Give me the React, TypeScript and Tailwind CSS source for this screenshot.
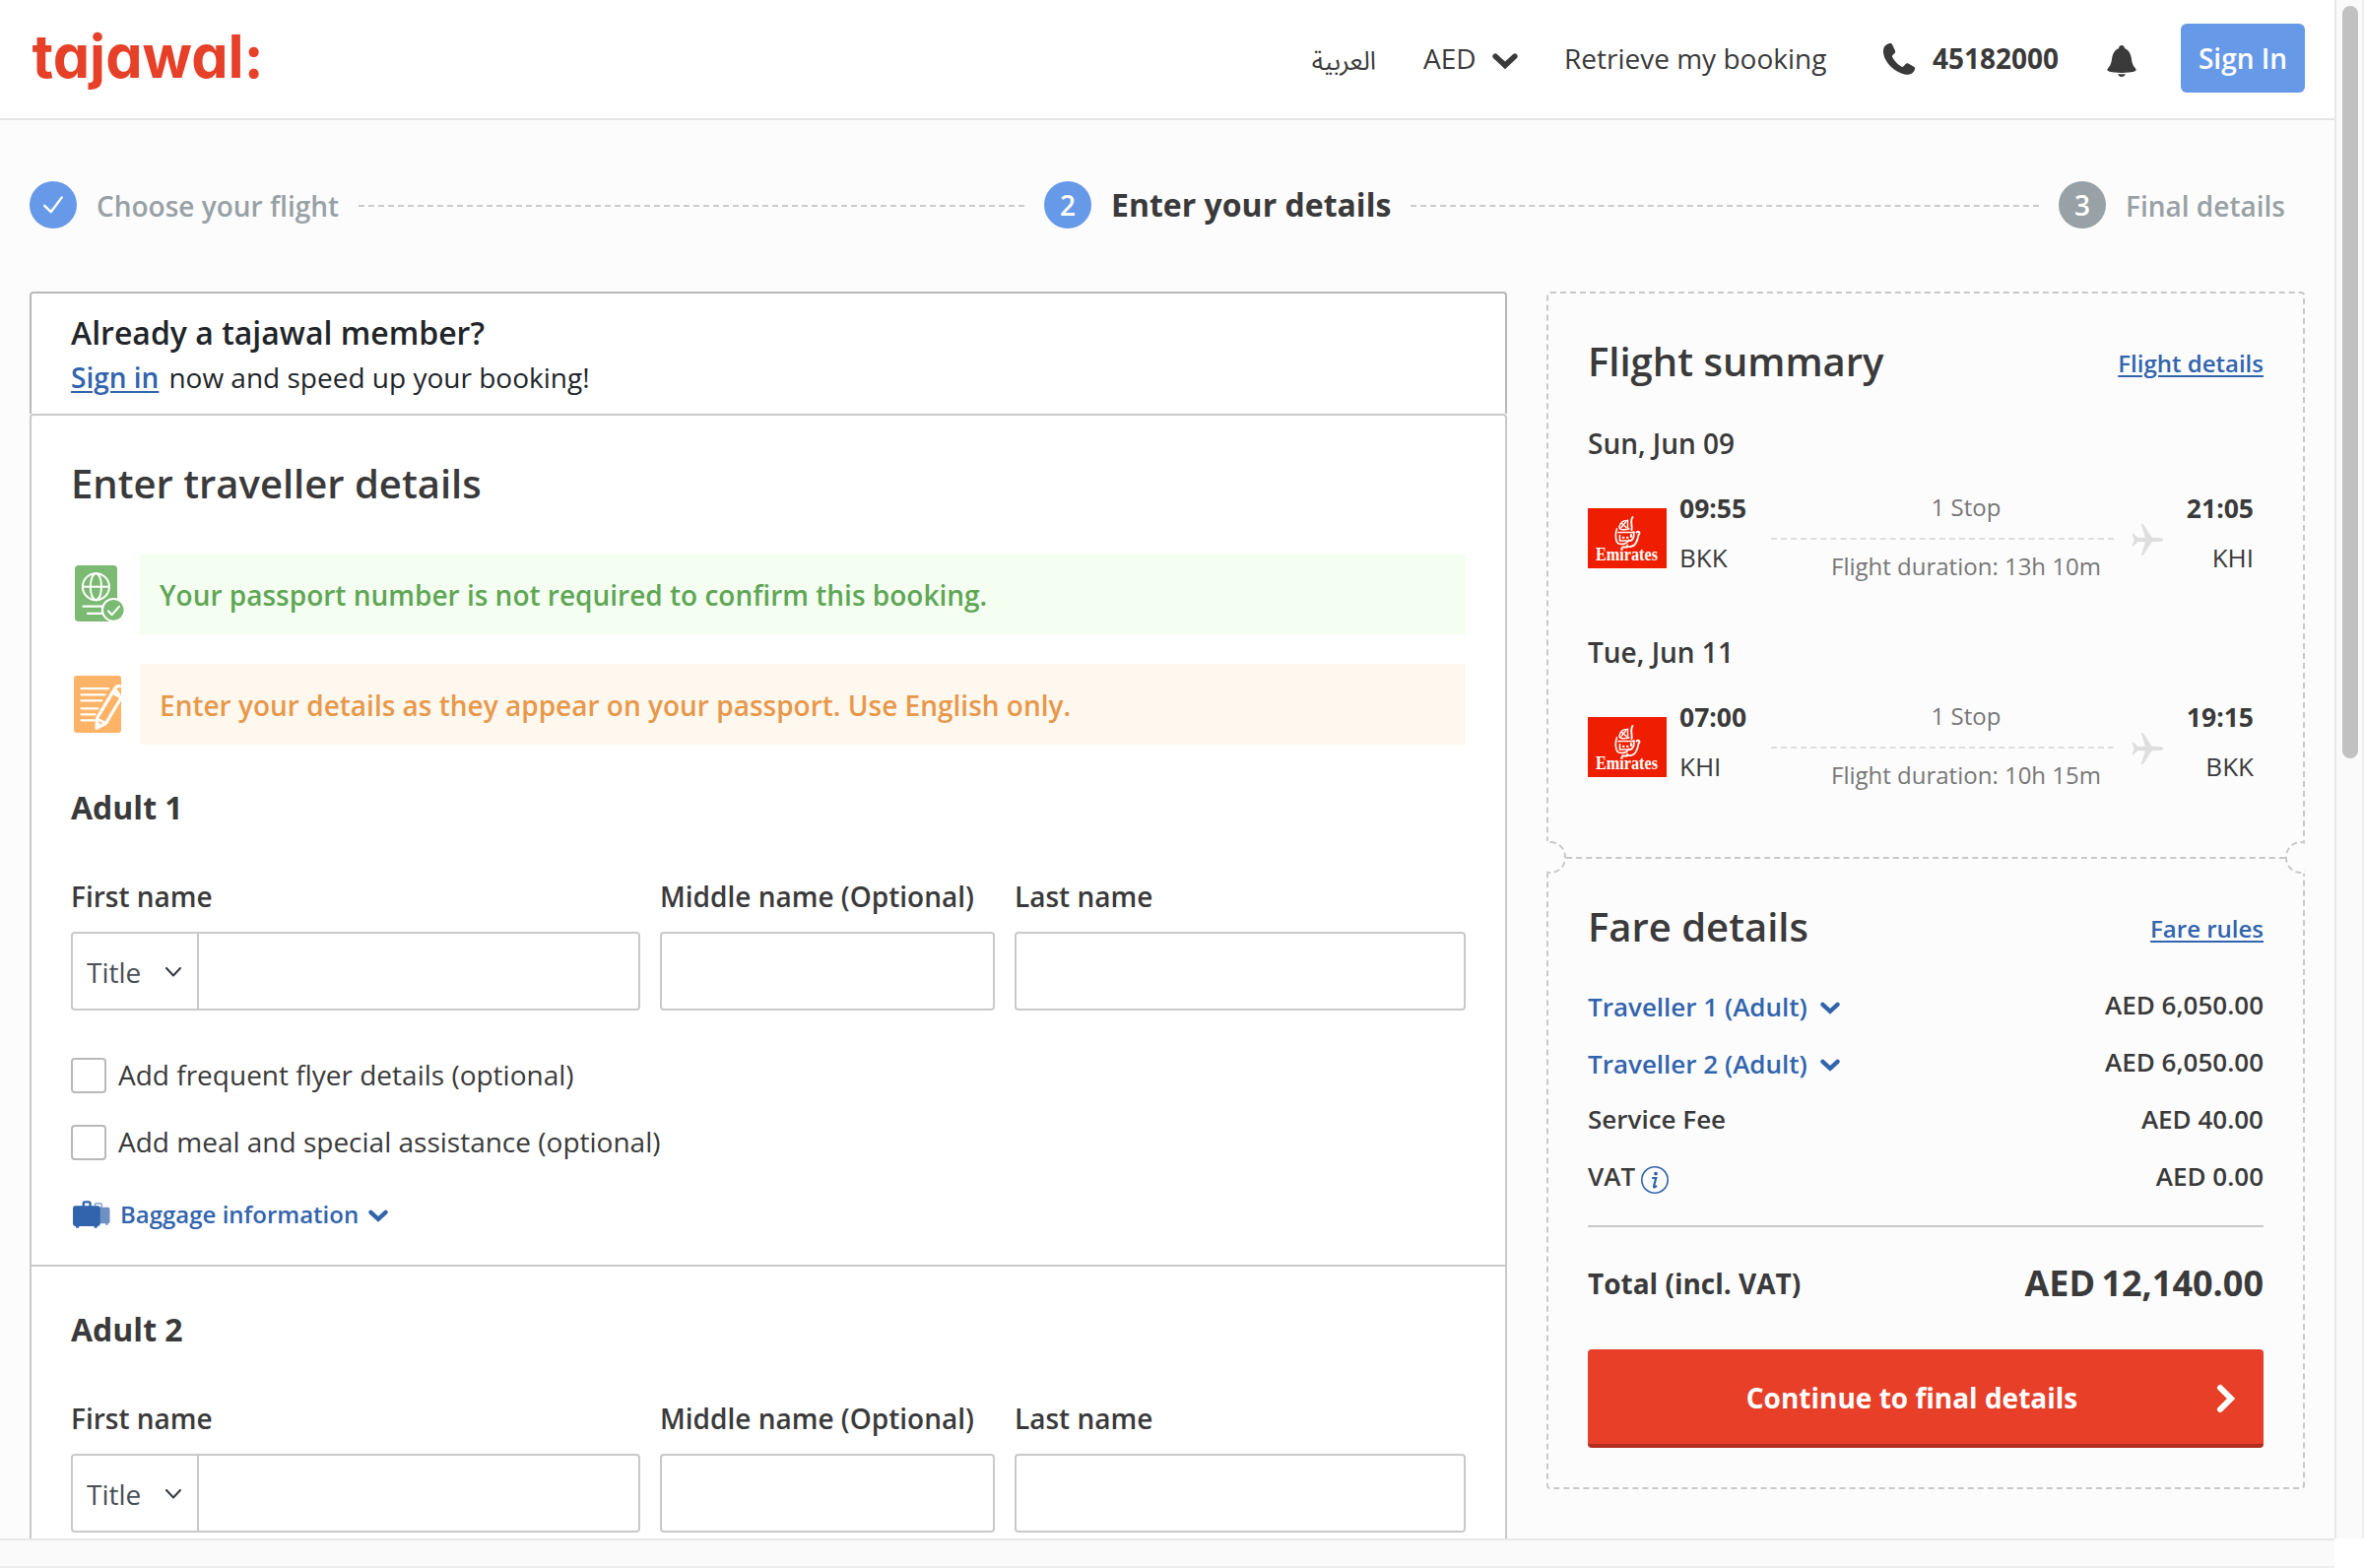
import React from "react";

function ChevronBold({ className }: { className: string }) {
  return (
    <svg viewBox="0 0 26 16" className={className} fill="none">
      <path d="M3.2 3.2 L13 12.4 L22.8 3.2" stroke="currentColor" strokeWidth="5.6" strokeLinecap="round" strokeLinejoin="miter" />
    </svg>
  );
}

function PhoneIcon() {
  return (
    <svg viewBox="0 0 34 34" className="mt-[2px] h-[34px] w-[34px]" fill="currentColor">
      <path d="M6.6 1.3 C3.2 2.2 1.2 4.6 1 8 C.6 14.5 4.600 21.500 10.500 26.300 C15.500 30.400 21.500 33 26 32.800 C29.500 32.600 32 30.600 33 27.600 C33.400 26.300 33.100 25.500 32 24.800 L26.800 21.700 C25.500 20.900 24.300 21.100 23.400 22.200 L21.600 24.200 C20.900 25 20.100 25.100 19.200 24.500 C15.500 22.200 12.400 19 10.300 15.200 C9.800 14.300 9.900 13.500 10.700 12.800 L12.300 11.300 C13.200 10.400 13.400 9.400 12.900 8.200 L10.200 2.600 C9.500 1.200 8.300.800 6.600 1.300 Z" />
    </svg>
  );
}

function BellIcon() {
  return (
    <svg viewBox="0 0 30 32" className="h-[32px] w-[30px]" fill="currentColor">
      <path d="M15 0 C13.300 0 12.100 1 12.100 2.900 C8.200 4.400 6 8 5.200 12.800 C4.500 18 3.600 20.600 1 23.400 C-.2 24.800.3 26 2 26.500 C6 27.500 10 27.900 15 27.900 C20 27.900 24 27.500 28 26.500 C29.700 26 30.200 24.800 29 23.400 C26.400 20.600 25.500 18 24.800 12.800 C24 8 21.800 4.400 17.900 2.900 C17.900 1 16.700 0 15 0 Z" />
      <path d="M11.200 29 C13.500 29.300 16.500 29.300 18.800 29 C18.200 31 17 32 15 32 C13 32 11.800 31 11.200 29 Z" />
    </svg>
  );
}

function PassportIcon() {
  return (
    <svg viewBox="0 0 51 58" className="h-[58px] w-[51px]" fill="none" stroke="#fff">
      <rect x="0" y="0" width="43" height="57" rx="4" fill="#7bba72" stroke="none" />
      <g strokeWidth="2">
        <circle cx="21.400" cy="21.700" r="13.500" />
        <ellipse cx="21.400" cy="21.700" rx="5.600" ry="13.500" />
        <path d="M8 21.700 H35" />
      </g>
      <path d="M8.500 41.700 H29 M13 48.800 H29" strokeWidth="2.200" strokeLinecap="round" />
      <circle cx="39.300" cy="45.300" r="11.400" fill="#7bba72" strokeWidth="2" />
      <path d="M33.800 46.300 L37.600 50.200 L45 41.800" strokeWidth="2" strokeLinecap="round" strokeLinejoin="round" />
    </svg>
  );
}

function FormIcon() {
  return (
    <svg viewBox="0 0 48 58" className="h-[58px] w-[48px]" fill="none" stroke="#fff">
      <rect width="48" height="58" rx="3" fill="#ffb366" stroke="none" />
      <path d="M7.500 13.200 H35 M7.500 19.300 H31.500 M7.500 25.300 H28.500 M7.500 33.300 H24.500 M7.500 39.300 H21.500 M7.500 45.300 H21" strokeWidth="2.200" strokeLinecap="round" />
      <path d="M41.500 13.400 C42.900 10.500 45.500 9.800 48 11.200 M48 22.500 L32.500 48.500 L23 53.200 L23.600 43 L41.500 13.400 Z" strokeWidth="3.200" strokeLinejoin="round" fill="#ffb366" />
      <path d="M39.500 17.500 L47.500 22 M24.500 44.500 L32 48" strokeWidth="2.600" />
      <path d="M23 53.200 L23.500 46.500 L28.300 50 Z" fill="#fff" stroke="none" />
    </svg>
  );
}

function LuggageIcon() {
  return (
    <svg viewBox="0 0 39 28" className="h-[28px] w-[38px]">
      <g fill="#7090c4">
        <path d="M23 5 V3.500 Q23 2.500 24 2.500 H29 Q30 2.500 30 3.500 V7" fill="none" stroke="#7090c4" strokeWidth="1.300" />
        <rect x="24" y="6.500" width="14.500" height="17" rx="2" />
        <rect x="34" y="23" width="2.500" height="2" />
      </g>
      <g fill="#3264ae">
        <path d="M11 6 V2.500 Q11 1 12.500 1 H16.500 Q18 1 18 2.500 V6" fill="none" stroke="#3264ae" strokeWidth="2.400" />
        <rect x="0" y="5" width="28.500" height="21.300" rx="2.500" />
        <rect x="3" y="25" width="3.500" height="3" rx="1" />
        <rect x="22" y="25" width="3.500" height="3" rx="1" />
      </g>
    </svg>
  );
}

function PlaneIcon() {
  return (
    <svg viewBox="0 0 32 32" className="h-[32px] w-[32px]" fill="#dedede">
      <path d="M32 16 C32 17.300 30.500 18 28.500 18 L20.500 18.200 L12.200 31.200 Q11.700 32 10.500 32 L9.700 32 L14 18.300 L6.500 18 L2 22.300 L.4 22.300 L2.800 16 L.4 9.700 L2 9.700 L6.500 14 L14 13.700 L9.700 0 L10.500 0 Q11.700 0 12.200.8 L20.500 13.800 L28.500 14 C30.500 14 32 14.700 32 16 Z" />
    </svg>
  );
}

function EmiratesLogo() {
  return (
    <svg viewBox="0 0 80 68" className="mt-[21px] h-[68px] w-[80px] shrink-0 overflow-visible">
      <rect width="80" height="68" fill="#fff" />
      <rect y="4" width="80" height="61" fill="#f01e00" />
      <g fill="none" stroke="#fff" strokeLinecap="round" strokeLinejoin="round">
        <path d="M45.500 13 C42.500 17 45.500 22 44.500 26" strokeWidth="1.900" />
        <path d="M40.500 17 C37 15.500 33 18.500 32 22.500 C31.500 26 36 26.500 42 25 M34 19 L39 23.500 M34 23.500 L38.500 18 M40.500 16 V25" strokeWidth="1.400" />
        <path d="M29.500 25 C27.500 30 28 38.500 31.500 40 C35 41 40 40.500 41.500 36.500 M31 28.500 H47 M32.500 31.500 V37 H42.500" strokeWidth="1.700" />
        <path d="M46.500 28 C47.500 32 46 36.500 43 37 M49.500 28.500 C51.500 26.500 54 29 51.500 31 C50.500 37 49 42.500 43.500 43 C41 43.300 40 42.500 40 41.500 M35 43.500 H40" strokeWidth="1.800" />
        <path d="M36 33.800 H36.500 M40 33.800 H40.500 M44 31 V33" strokeWidth="2.200" />
      </g>
      <text x="8" y="56.500" textLength="63" lengthAdjust="spacingAndGlyphs" fill="#fff" className="font-['Liberation_Serif',serif] text-[18.500px] font-bold">
        Emirates
      </text>
    </svg>
  );
}

function Header() {
  return (
    <header className="flex h-[122px] items-start border-b-2 border-[#e5e5e5] bg-white">
      <svg viewBox="0 0 240 98" className="mt-[14px] ml-[30px] h-[98px] w-[240px] shrink-0 overflow-visible">
        <text
          x="2.5"
          y="64.5"
          textLength="235"
          lengthAdjust="spacingAndGlyphs"
          fill="#e64128"
          className="font-['Inter',sans-serif] text-[61px] font-bold [font-feature-settings:'cv11']"
        >
          tajawal:
        </text>
      </svg>
      <nav className="mr-[30px] ml-auto flex h-[118px] items-center text-[28px] text-[#3a3a3a]">
        <span className="w-[113px] pt-[7px] font-['Noto_Sans_Arabic','Noto_Naskh_Arabic','DejaVu_Sans',sans-serif] text-[26px]" dir="rtl" lang="ar">
          <span className="mr-[48px] block w-[66px] whitespace-nowrap">العربية</span>
        </span>
        <span className="w-[70px]">AED</span>
        <ChevronBold className="mt-[5px] mr-[47px] h-[16px] w-[26px]" />
        <span className="mr-[56px] w-[267px] whitespace-nowrap">Retrieve my booking</span>
        <PhoneIcon />
        <span className="ml-[17px] w-[177px] font-bold">45182000</span>
        <span className="mt-[6px] mr-[45px]">
          <BellIcon />
        </span>
        <button className="h-[70px] w-[126px] rounded-[6px] bg-[#6799e9] font-semibold text-white">Sign In</button>
      </nav>
    </header>
  );
}

function Steps() {
  return (
    <div className="mt-[62px] ml-[30px] flex h-[48px] w-[2310px] items-center text-[28px]">
      <div className="flex w-[1030px] items-center">
        <span className="flex h-[48px] w-[48px] shrink-0 items-center justify-center rounded-full bg-[#6799e9]">
          <svg viewBox="0 0 20 18" className="h-[18px] w-[20px]" fill="none">
            <path d="M1.200 9.800 L7.700 16.200 L18.800 1.400" stroke="#fff" strokeWidth="2.400" strokeLinecap="round" strokeLinejoin="round" />
          </svg>
        </span>
        <span className="mt-[2px] ml-[20px] font-semibold whitespace-nowrap text-[#98a1a5]">Choose your flight</span>
        <span className="mx-[20px] mt-[2px] flex-1 border-t-2 border-dashed border-[#cbcbcb]" />
      </div>
      <div className="flex w-[1030px] items-center">
        <span className="flex h-[48px] w-[48px] shrink-0 items-center justify-center rounded-full bg-[#6799e9] font-semibold text-white">2</span>
        <span className="ml-[20px] text-[32px] font-bold whitespace-nowrap text-[#3a3a3a]">Enter your details</span>
        <span className="mx-[20px] mt-[2px] flex-1 border-t-2 border-dashed border-[#cbcbcb]" />
      </div>
      <div className="flex items-center">
        <span className="flex h-[48px] w-[48px] shrink-0 items-center justify-center rounded-full bg-[#98a1a5] font-semibold text-white">3</span>
        <span className="mt-[2px] ml-[20px] font-semibold whitespace-nowrap text-[#98a1a5]">Final details</span>
      </div>
    </div>
  );
}

function NameFields({ n }: { n: number }) {
  return (
    <div>
      <h3 className="text-[32px] leading-[48px] font-bold">Adult {n}</h3>
      <div className="mt-[46px] flex gap-[20px] text-[28px]">
        <div className="w-[578px]">
          <div className="leading-[40px] font-semibold">First name</div>
          <div className="mt-[16px] flex h-[80px] rounded-[4px] border-2 border-[#c9c9c9]">
            <div className="flex w-[128px] items-center border-r-2 border-[#c9c9c9] pl-[14px] text-[#495057]">
              <span className="w-[80px] pt-[2px]">Title</span>
              <svg viewBox="0 0 16 10" className="mt-[1px] h-[10px] w-[16px] text-[#343a40]" fill="none">
                <path d="M1 1 L8 8.500 L15 1" stroke="currentColor" strokeWidth="2" strokeLinecap="round" strokeLinejoin="round" />
              </svg>
            </div>
          </div>
        </div>
        <div className="w-[340px]">
          <div className="leading-[40px] font-semibold whitespace-nowrap">Middle name (Optional)</div>
          <div className="mt-[16px] h-[80px] rounded-[4px] border-2 border-[#c9c9c9]" />
        </div>
        <div className="w-[458px]">
          <div className="leading-[40px] font-semibold">Last name</div>
          <div className="mt-[16px] h-[80px] rounded-[4px] border-2 border-[#c9c9c9]" />
        </div>
      </div>
    </div>
  );
}

function Extras() {
  return (
    <div>
      <div className="mt-[48px] flex flex-col gap-[32px] text-[28px] leading-[34px]">
        {["Add frequent flyer details (optional)", "Add meal and special assistance (optional)"].map((t) => (
          <label key={t} className="flex h-[36px] items-start gap-[12px]">
            <span className="h-[36px] w-[36px] rounded-[4px] border-2 border-[#b9b9b9]" />
            <span>{t}</span>
          </label>
        ))}
      </div>
      <div className="mt-[37px] flex h-[36px] items-center pl-[2px] text-[24px] font-semibold text-[#3264ae]">
        <LuggageIcon />
        <span className="ml-[10px]">Baggage information</span>
        <ChevronBold className="mt-[2px] ml-[10px] h-[13px] w-[20px]" />
      </div>
    </div>
  );
}

function Form() {
  return (
    <div className="w-[1500px] text-[#3a3a3a]">
      <div className="h-[124px] rounded-t-[4px] border-x-2 border-t-2 border-[#b9b9b9] bg-white px-[40px] pt-[17px] text-[#212529]">
        <div className="text-[32px] leading-[46px] font-semibold">Already a tajawal member?</div>
        <div className="-mt-[1px] text-[28px] leading-[46px]">
          <a className="mr-[10px] font-semibold text-[#3264ae] underline decoration-2 underline-offset-[3px]">Sign in</a>
          now and speed up your booking!
        </div>
      </div>
      <div className="rounded-t-[4px] border-2 border-[#c9c9c9] bg-white">
        <div className="px-[40px] pt-[39px] pb-[33px]">
          <h2 className="text-[40px] leading-[60px] font-semibold">Enter traveller details</h2>
          <div className="mt-[41px] flex h-[82px]">
            <div className="w-[70px] pt-[12px] pl-[4px]">
              <PassportIcon />
            </div>
            <div className="flex-1 bg-[#f4fff2] pl-[20px] text-[28px] leading-[84px] font-semibold text-[#5fa655]">
              Your passport number is not required to confirm this booking.
            </div>
          </div>
          <div className="mt-[30px] mb-[40px] flex h-[82px]">
            <div className="w-[70px] pt-[12px] pl-[3px]">
              <FormIcon />
            </div>
            <div className="flex-1 bg-[#fff8ef] pl-[20px] text-[28px] leading-[84px] font-semibold text-[#e8984a]">
              Enter your details as they appear on your passport. Use English only.
            </div>
          </div>
          <NameFields n={1} />
          <Extras />
        </div>
        <div className="border-t-2 border-[#c9c9c9] px-[40px] pt-[40px] pb-[60px]">
          <NameFields n={2} />
        </div>
      </div>
    </div>
  );
}

type Leg = { date: string; dep: string; from: string; arr: string; to: string; dur: string };

const legs: Leg[] = [
  { date: "Sun, Jun 09", dep: "09:55", from: "BKK", arr: "21:05", to: "KHI", dur: "13h 10m" },
  { date: "Tue, Jun 11", dep: "07:00", from: "KHI", arr: "19:15", to: "BKK", dur: "10h 15m" },
];

function FlightLeg({ leg }: { leg: Leg }) {
  return (
    <div>
      <div className="pt-[1px] text-[28px] leading-[40px] font-semibold">{leg.date}</div>
      <div className="mt-[21px] flex h-[104px] items-start text-[26px] leading-[50px]">
        <EmiratesLogo />
        <div className="ml-[13px] w-[93px]">
          <div className="text-[26.500px] font-bold">{leg.dep}</div>
          <div>{leg.from}</div>
        </div>
        <div className="w-[398px] text-center text-[24px] text-[#777]">
          <div className="pr-[2px] leading-[47px]">1 Stop</div>
          <div className="mt-[-6px] flex h-[32px] items-center justify-between">
            <span className="-mt-[2px] w-[348px] border-t-2 border-dashed border-[#dedede]" />
            <PlaneIcon />
          </div>
          <div className="-mt-[10px] pr-[2px] leading-[41px]">Flight duration: {leg.dur}</div>
        </div>
        <div className="flex-1 pr-[10px] text-right">
          <div className="text-[26.500px] font-bold">{leg.arr}</div>
          <div>{leg.to}</div>
        </div>
      </div>
    </div>
  );
}

function FareRow({ label, amount, link, info }: { label: string; amount: string; link?: boolean; info?: boolean }) {
  return (
    <div className="flex h-[58px] items-center justify-between text-[26px] font-semibold">
      {link ? (
        <span className="flex items-center pt-[4px] text-[#3264ae]">
          {label}
          <ChevronBold className="mt-[3px] ml-[13px] h-[13px] w-[20px]" />
        </span>
      ) : (
        <span className="flex items-center">
          {label}
          {info && (
            <svg viewBox="0 0 28 28" className="mt-[7px] ml-[6px] h-[28px] w-[28px]">
              <circle cx="14" cy="14" r="13.200" fill="none" stroke="#3264ae" strokeWidth="1.600" />
              <circle cx="15" cy="7.600" r="1.900" fill="#3264ae" />
              <path d="M11.200 12 H15.200 L13 20.600 Q12.900 21.600 14 21.200 L16 19.800" fill="none" stroke="#3264ae" strokeWidth="2.200" />
            </svg>
          )}
        </span>
      )}
      <span>{amount}</span>
    </div>
  );
}

function Summary() {
  return (
    <aside className="w-[770px] text-[#3a3a3a]">
      <section className="h-[574px] rounded-t-[4px] border-x-2 border-t-2 border-dashed border-[#c9c9c9] px-[40px] pt-[39px]">
        <div className="mb-[32px] flex h-[60px] items-center justify-between">
          <h2 className="text-[40px] leading-[60px] font-semibold">Flight summary</h2>
          <a className="pt-[3px] text-[24px] font-semibold text-[#3264ae] underline decoration-2 underline-offset-[3px]">Flight details</a>
        </div>
        <FlightLeg leg={legs[0]} />
        <div className="h-[46px]" />
        <FlightLeg leg={legs[1]} />
      </section>
      <section className="relative h-[642px] rounded-b-[4px] border-2 border-dashed border-[#c9c9c9] px-[40px] pt-[39px]">
        <span className="absolute -top-[18px] -left-[2px] h-[33px] w-[20px] overflow-hidden bg-[#fcfcfc]">
          <span className="-ml-[12px] block h-[33px] w-[32px] rounded-full border-2 border-dashed border-[#c9c9c9]" />
        </span>
        <span className="absolute -top-[18px] -right-[2px] h-[33px] w-[20px] overflow-hidden bg-[#fcfcfc]">
          <span className="block h-[33px] w-[32px] rounded-full border-2 border-dashed border-[#c9c9c9]" />
        </span>
        <div className="mb-[20px] flex h-[60px] items-center justify-between">
          <h2 className="text-[40px] leading-[60px] font-semibold">Fare details</h2>
          <a className="pt-[3px] text-[24px] font-semibold text-[#3264ae] underline decoration-2 underline-offset-[3px]">Fare rules</a>
        </div>
        <FareRow label="Traveller 1 (Adult)" amount="AED 6,050.00" link />
        <FareRow label="Traveller 2 (Adult)" amount="AED 6,050.00" link />
        <FareRow label="Service Fee" amount="AED 40.00" />
        <FareRow label="VAT" amount="AED 0.00" info />
        <div className="mt-[21px] h-[2px] bg-[#c9c9c9]" />
        <div className="mt-[26px] flex h-[60px] items-center justify-between font-bold">
          <span className="pt-[2px] text-[28px]">Total (incl. VAT)</span>
          <span className="pt-[1px] text-[36px] [word-spacing:-3px]">AED 12,140.00</span>
        </div>
        <button className="mt-[38px] flex h-[100px] w-[686px] items-center rounded-[4px] border-b-4 border-[#b22e1e] bg-[#e83f29] text-white">
          <span className="w-[658px] pt-[2px] text-center text-[28px] font-bold">Continue to final details</span>
          <svg viewBox="0 0 20 30" className="mt-[3px] -ml-[20px] h-[30px] w-[20px]" fill="none">
            <path d="M4 4 L15 15 L4 26" stroke="#fff" strokeWidth="6" strokeLinecap="round" />
          </svg>
        </button>
      </section>
    </aside>
  );
}

export default function App() {
  return (
    <div className="h-[1592px] w-[2400px] overflow-hidden bg-white font-['Open_Sans',sans-serif]">
      <div className="flex h-[1562px]">
        <div className="h-[1562px] w-[2370px] overflow-hidden bg-[#fcfcfc]">
          <Header />
          <Steps />
          <div className="mt-[64px] ml-[30px] flex items-start gap-[40px]">
            <Form />
            <Summary />
          </div>
        </div>
        <div className="h-[1562px] w-[30px] border-x-2 border-l-[#e7e7e7] border-r-[#eeeeee] bg-[#fafafa] pt-[6px] pl-[6px]">
          <div className="h-[764px] w-[16px] rounded-full bg-[#c1c1c1]" />
        </div>
      </div>
      <div className="h-[30px] w-[2370px] border-y-2 border-t-[#e7e7e7] border-b-[#eeeeee] bg-[#fafafa]" />
    </div>
  );
}
